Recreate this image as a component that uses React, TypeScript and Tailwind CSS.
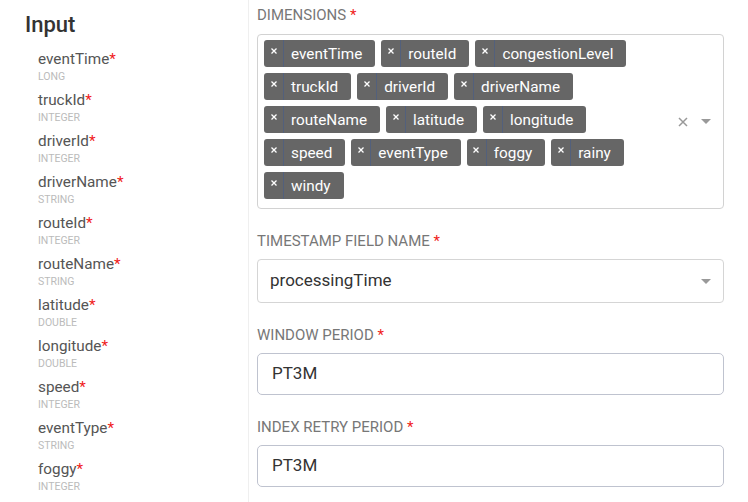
import React from "react";

const fields: [string, string][] = [
  ["eventTime", "LONG"],
  ["truckId", "INTEGER"],
  ["driverId", "INTEGER"],
  ["driverName", "STRING"],
  ["routeId", "INTEGER"],
  ["routeName", "STRING"],
  ["latitude", "DOUBLE"],
  ["longitude", "DOUBLE"],
  ["speed", "INTEGER"],
  ["eventType", "STRING"],
  ["foggy", "INTEGER"],
];

const dims = [
  "eventTime",
  "routeId",
  "congestionLevel",
  "truckId",
  "driverId",
  "driverName",
  "routeName",
  "latitude",
  "longitude",
  "speed",
  "eventType",
  "foggy",
  "rainy",
  "windy",
];

function Label({ text }: { text: string }) {
  return (
    <div className="text-[15px] leading-[20px] text-[#777] uppercase">
      {text} <span className="text-[#f01b1b]">*</span>
    </div>
  );
}

function Caret() {
  return (
    <svg width="10" height="5" viewBox="0 0 10 5">
      <polygon points="0,0 10,0 5,5" fill="#999" />
    </svg>
  );
}

function Tag({ text }: { text: string }) {
  return (
    <div className="flex h-[27px] bg-[#666] rounded-[3px] text-white">
      <div className="w-[20px] flex justify-center pt-[8px] border-r border-[#52607c]">
        <svg width="6" height="6" viewBox="0 0 6 6">
          <path d="M0.5 0.5 L5.5 5.5 M5.5 0.5 L0.5 5.5" stroke="#fff" strokeWidth="1.3" />
        </svg>
      </div>
      <div className="pl-[7px] pr-[13px] flex items-center text-[15.3px] leading-[20px]">{text}</div>
    </div>
  );
}

export default function App() {
  return (
    <div className="w-[748px] h-[502px] overflow-hidden flex bg-white font-['Roboto',sans-serif]">
      <div className="w-[249px] shrink-0 border-r border-[#efefef] pt-[12px]">
        <div className="pl-[25px] text-[22px] leading-[26px] font-medium text-[#333]">Input</div>
        <div className="mt-[11px] pl-[38px] flex flex-col gap-[7px]">
          {fields.map(([n, t]) => (
            <div key={n}>
              <div className="text-[15.3px] leading-[20px] text-[#555]">
                {n}
                <span className="text-[#f01b1b]">*</span>
              </div>
              <div className="text-[10.5px] leading-[12px] mt-[2px] text-[#bbb]">{t}</div>
            </div>
          ))}
        </div>
      </div>
      <div className="flex-1 pl-[8px] pr-[24px] pt-[5px]">
        <Label text="Dimensions" />
        <div className="mt-[9px] flex border border-[#d2d2d2] rounded-[4px]">
          <div className="flex-1 flex flex-wrap gap-[6px] pl-[6px] pt-[5px] pb-[9px] pr-[10px]">
            {dims.map((d) => (
              <Tag key={d} text={d} />
            ))}
          </div>
          <div className="w-[64px] flex items-center">
            <div className="ml-[19px]">
              <svg width="10" height="10" viewBox="0 0 10 10" className="block">
                <path d="M1 1 L9 9 M9 1 L1 9" stroke="#999" strokeWidth="1.5" />
              </svg>
            </div>
            <div className="ml-[13px] flex">
              <Caret />
            </div>
          </div>
        </div>

        <div className="mt-[22px]">
          <Label text="Timestamp field name" />
        </div>
        <div className="mt-[8px] h-[44px] border border-[#d5d5d5] rounded-[4px] flex items-center justify-between pl-[12px] pr-[12px]">
          <span className="text-[17px] text-[#333]">processingTime</span>
          <Caret />
        </div>

        <div className="mt-[22px]">
          <Label text="Window period" />
        </div>
        <div className="mt-[8px] h-[42px] border border-[#bfc3cf] rounded-[5px] flex items-center pl-[14px]">
          <span className="text-[17px] text-[#333]">PT3M</span>
        </div>

        <div className="mt-[22px]">
          <Label text="Index retry period" />
        </div>
        <div className="mt-[8px] h-[42px] border border-[#bfc3cf] rounded-[5px] flex items-center pl-[14px]">
          <span className="text-[17px] text-[#333]">PT3M</span>
        </div>
      </div>
    </div>
  );
}
